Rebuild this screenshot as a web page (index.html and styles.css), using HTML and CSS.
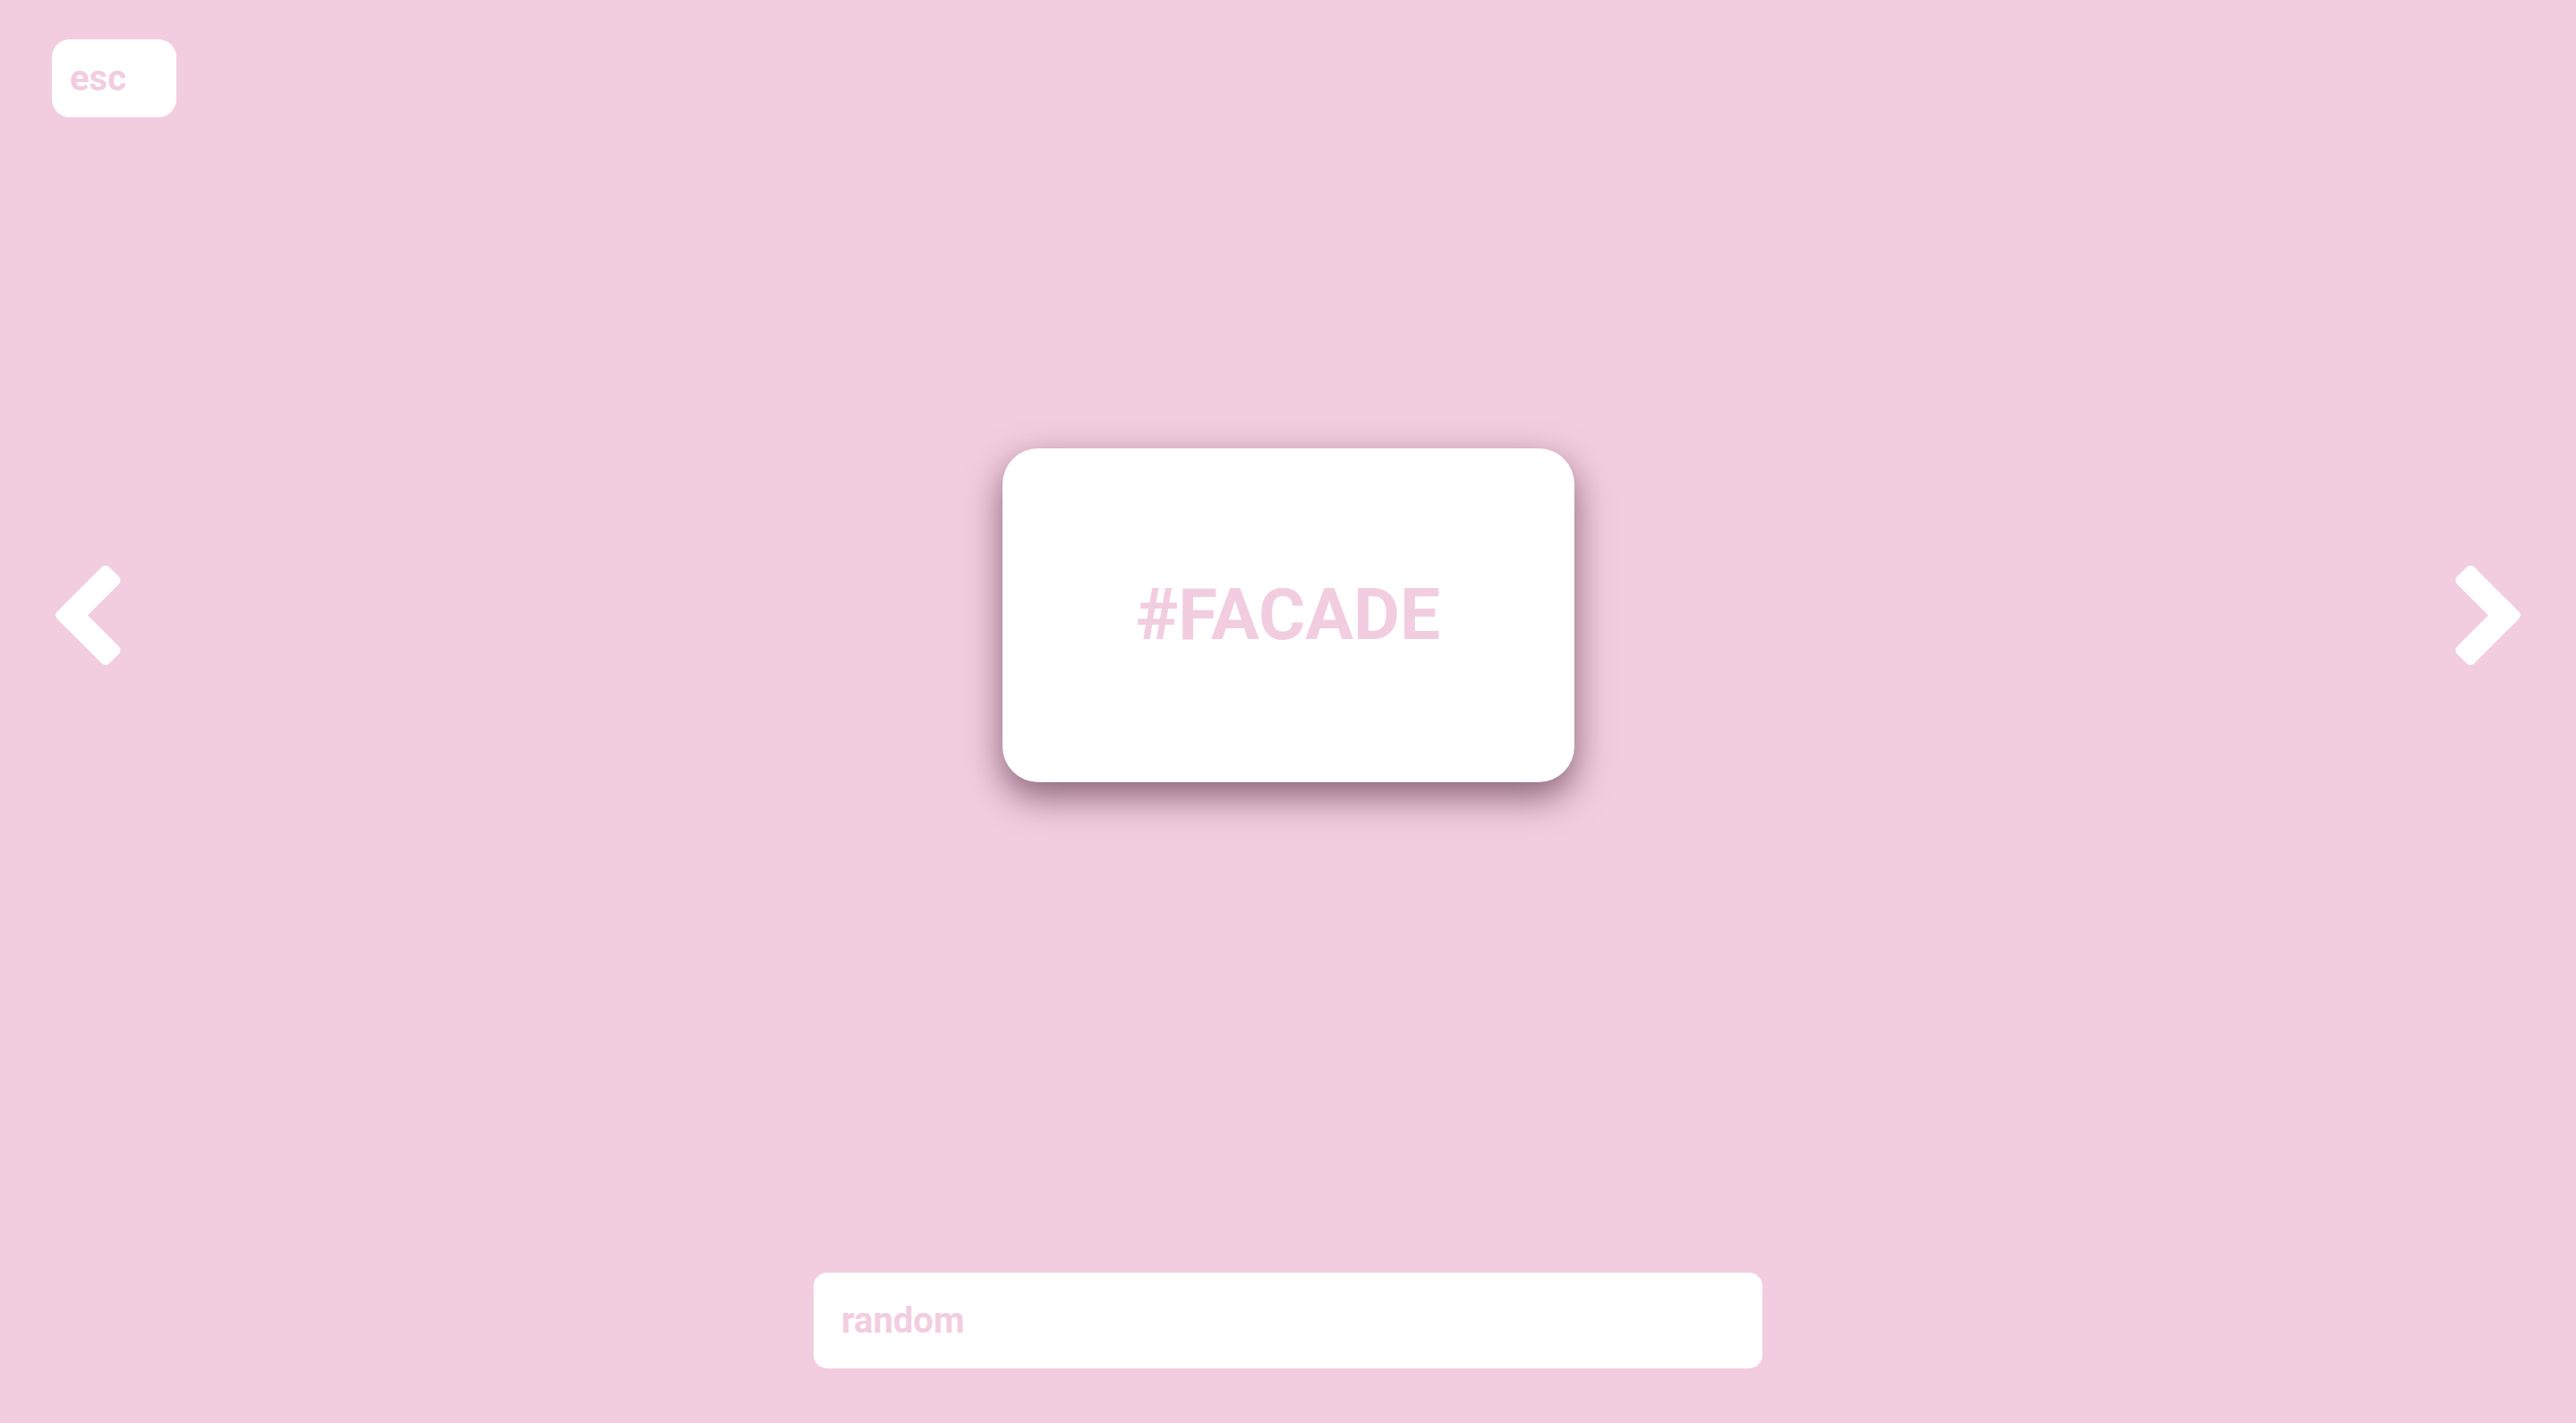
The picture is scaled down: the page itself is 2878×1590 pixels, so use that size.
FILE: index.html
```html
<!DOCTYPE html>
<html lang="en">
<head>
    <meta charset="UTF-8">
    <meta name="viewport" content="width=device-width, initial-scale=1.0">
    <title>Colour Cards</title>
    <link rel="stylesheet" href="styles.css">
</head>
<body>
    <header class="top-bar">
        <button class="esc-button">esc</button>
    </header>

    <main class="stage">
        <button class="nav-button" aria-label="Previous">
            <svg class="chevron" viewBox="0 0 90 130">
                <rect x="-13.5" y="-13.5" width="82" height="27" rx="6" transform="translate(23 65.5) rotate(-45)"/>
                <rect x="-13.5" y="-13.5" width="82" height="27" rx="6" transform="translate(23 65.5) rotate(45)"/>
            </svg>
        </button>

        <div class="card">
            <span class="card-label">#FACADE</span>
        </div>

        <button class="nav-button" aria-label="Next">
            <svg class="chevron chevron-right" viewBox="0 0 90 130">
                <rect x="-13.5" y="-13.5" width="82" height="27" rx="6" transform="translate(23 65.5) rotate(-45)"/>
                <rect x="-13.5" y="-13.5" width="82" height="27" rx="6" transform="translate(23 65.5) rotate(45)"/>
            </svg>
        </button>
    </main>

    <footer class="bottom-bar">
        <input type="text" class="search-input" value="random">
    </footer>
</body>
</html>
```

FILE: styles.css
```css
html, body {
    height: 100%;
}
body {
    font-family: Roboto, "Liberation Sans", sans-serif;
    font-weight: 700;
    margin: 0;
    padding: 44px 56px 61px;
    box-sizing: border-box;
    background-color: #f2cddf;
    color: #f2cddf;
    display: flex;
    flex-direction: column;
}
.top-bar {
    display: flex;
    padding-left: 2px;
}
.esc-button {
    width: 139px;
    height: 87px;
    padding: 0 0 0 20px;
    text-align: left;
    font-family: inherit;
    font-weight: 700;
    font-size: 40px;
    line-height: 87px;
    color: #f2cddf;
    background-color: #fff;
    border: none;
    border-radius: 20px;
    cursor: pointer;
}
.stage {
    flex: 1;
    display: flex;
    align-items: center;
    justify-content: space-between;
    padding-bottom: 179px;
}
.nav-button {
    padding: 0;
    background: none;
    border: none;
    cursor: pointer;
    display: flex;
}
.chevron {
    width: 90px;
    height: 130px;
    fill: #fff;
}
.chevron-right {
    transform: scaleX(-1);
}
.card {
    width: 639px;
    height: 373px;
    background-color: #fff;
    border-radius: 40px;
    box-shadow: 0 16px 40px rgba(50, 10, 30, 0.55);
    display: flex;
    align-items: center;
    justify-content: center;
}
.card-label {
    font-size: 80px;
    line-height: 1;
    color: #f2cddf;
}
.bottom-bar {
    display: flex;
    justify-content: center;
}
.search-input {
    width: 1060px;
    height: 107px;
    box-sizing: border-box;
    padding: 0 31px;
    font-family: inherit;
    font-weight: 700;
    font-size: 40px;
    color: #f2cddf;
    background-color: #fff;
    border: none;
    border-radius: 15px;
    outline: none;
}
```
